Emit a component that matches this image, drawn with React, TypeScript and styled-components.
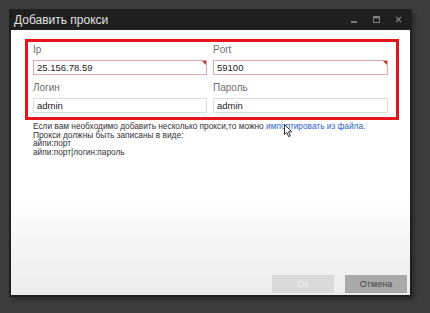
import React from 'react'
import styled, { createGlobalStyle } from 'styled-components'

const GlobalStyle = createGlobalStyle`
  html, body {
    margin: 0;
    padding: 0;
    background: #3c3c3c;
  }
`

const Page = styled.div`
  width: 430px;
  height: 313px;
  padding: 9px 0 0 9px;
  box-sizing: border-box;
  position: relative;
  overflow: hidden;
`

const Window = styled.div`
  width: 403px;
  height: 288px;
  background: #1f1f1f;
  display: flex;
  flex-direction: column;
  padding: 0 2px 2px 2px;
  box-sizing: border-box;
  box-shadow: 3px 3px 4px rgba(0, 0, 0, 0.25);
`

const TitleBar = styled.div`
  height: 21px;
  display: flex;
  align-items: center;
  padding-left: 3px;
  flex-shrink: 0;
`

const Title = styled.div`
  flex: 1;
  color: #e2e2e2;
  font-family: 'Liberation Sans', Arial, sans-serif;
  font-size: 12px;
  margin-top: 1px;
`

const Controls = styled.div`
  display: flex;
  align-items: center;
  gap: 15px;
  padding-right: 8px;
  color: #7e7e7e;
`

const Body = styled.div`
  flex: 1;
  background: linear-gradient(#ffffff 0%, #ffffff 62%, #ececec 100%);
  display: flex;
  flex-direction: column;
  padding: 9px 3px 2px 14px;
  box-sizing: border-box;
`

const Frame = styled.div`
  width: 374px;
  box-sizing: border-box;
  border: 3px solid #e8141c;
  padding: 1px 8px 4px 5px;
  display: grid;
  grid-template-columns: 174px 175px;
  column-gap: 6px;
  row-gap: 6px;
`

const Field = styled.div`
  display: flex;
  flex-direction: column;
  gap: 3px;
`

const Label = styled.div`
  font-family: 'Liberation Sans', Arial, sans-serif;
  font-size: 10px;
  line-height: 14px;
  color: #6e6e6e;
`

const Input = styled.div<{ $invalid?: boolean }>`
  position: relative;
  height: 15px;
  box-sizing: border-box;
  border: 1px solid ${(p) => (p.$invalid ? '#dcaaa8' : '#dcdcdc')};
  background: #fff;
  padding-left: 3px;
  font-family: 'Liberation Sans', Arial, sans-serif;
  font-size: 9.5px;
  line-height: 13px;
  color: #222;

  &::after {
    content: '';
    display: ${(p) => (p.$invalid ? 'block' : 'none')};
    position: absolute;
    top: 0;
    right: 0;
    width: 0;
    height: 0;
    border-top: 4px solid #c0392b;
    border-left: 4px solid transparent;
  }
`

const Hint = styled.div`
  margin: 2px 0 0 8px;
  font-family: 'Liberation Sans', Arial, sans-serif;
  font-size: 8.3px;
  line-height: 8.7px;
  color: #333;
`

const HintLink = styled.span`
  color: #2b5fd0;
`

const Footer = styled.div`
  margin-top: auto;
  display: flex;
  justify-content: flex-end;
  gap: 11px;
`

const Button = styled.div<{ $disabled?: boolean }>`
  width: 62px;
  height: 18px;
  display: flex;
  align-items: center;
  justify-content: center;
  background: ${(p) => (p.$disabled ? '#dadada' : '#a9a9a9')};
  color: ${(p) => (p.$disabled ? '#f2f2f2' : '#444')};
  font-family: 'Liberation Sans', Arial, sans-serif;
  font-size: 9px;
`

const Cursor = styled.svg`
  position: absolute;
  left: 284px;
  top: 124px;
`

const App = () => (
  <>
    <GlobalStyle />
    <Page>
      <Window>
        <TitleBar>
          <Title>Добавить прокси</Title>
          <Controls>
            <svg width="7" height="7" viewBox="0 0 7 7">
              <rect x="0" y="5" width="6" height="2" fill="currentColor" />
            </svg>
            <svg width="7" height="7" viewBox="0 0 7 7">
              <rect x="0.5" y="0.5" width="6" height="6" fill="none" stroke="currentColor" />
              <rect x="0.5" y="0.5" width="6" height="2" fill="currentColor" />
            </svg>
            <svg width="7" height="7" viewBox="0 0 7 7">
              <path d="M1 1 L6 6 M6 1 L1 6" stroke="currentColor" strokeWidth="1.2" />
            </svg>
          </Controls>
        </TitleBar>
        <Body>
          <Frame>
            <Field>
              <Label>Ip</Label>
              <Input $invalid>25.156.78.59</Input>
            </Field>
            <Field>
              <Label>Port</Label>
              <Input $invalid>59100</Input>
            </Field>
            <Field>
              <Label>Логин</Label>
              <Input>admin</Input>
            </Field>
            <Field>
              <Label>Пароль</Label>
              <Input>admin</Input>
            </Field>
          </Frame>
          <Hint>
            Если вам необходимо добавить несколько прокси,то можно{' '}
            <HintLink>импортировать из файла.</HintLink>
            <br />
            Прокси должны быть записаны в виде:
            <br />
            айпи:порт
            <br />
            айпи:порт|логин:пароль
          </Hint>
          <Footer>
            <Button $disabled>Ок</Button>
            <Button>Отмена</Button>
          </Footer>
        </Body>
      </Window>
      <Cursor width="10" height="14" viewBox="0 0 10 14">
        <path
          d="M0.5 0.5 L0.5 10.5 L2.8 8.4 L4.6 12.6 L6.3 11.9 L4.5 7.8 L7.8 7.8 Z"
          fill="#fff"
          stroke="#333"
          strokeWidth="1"
          strokeLinejoin="round"
        />
      </Cursor>
    </Page>
  </>
)

export default App
